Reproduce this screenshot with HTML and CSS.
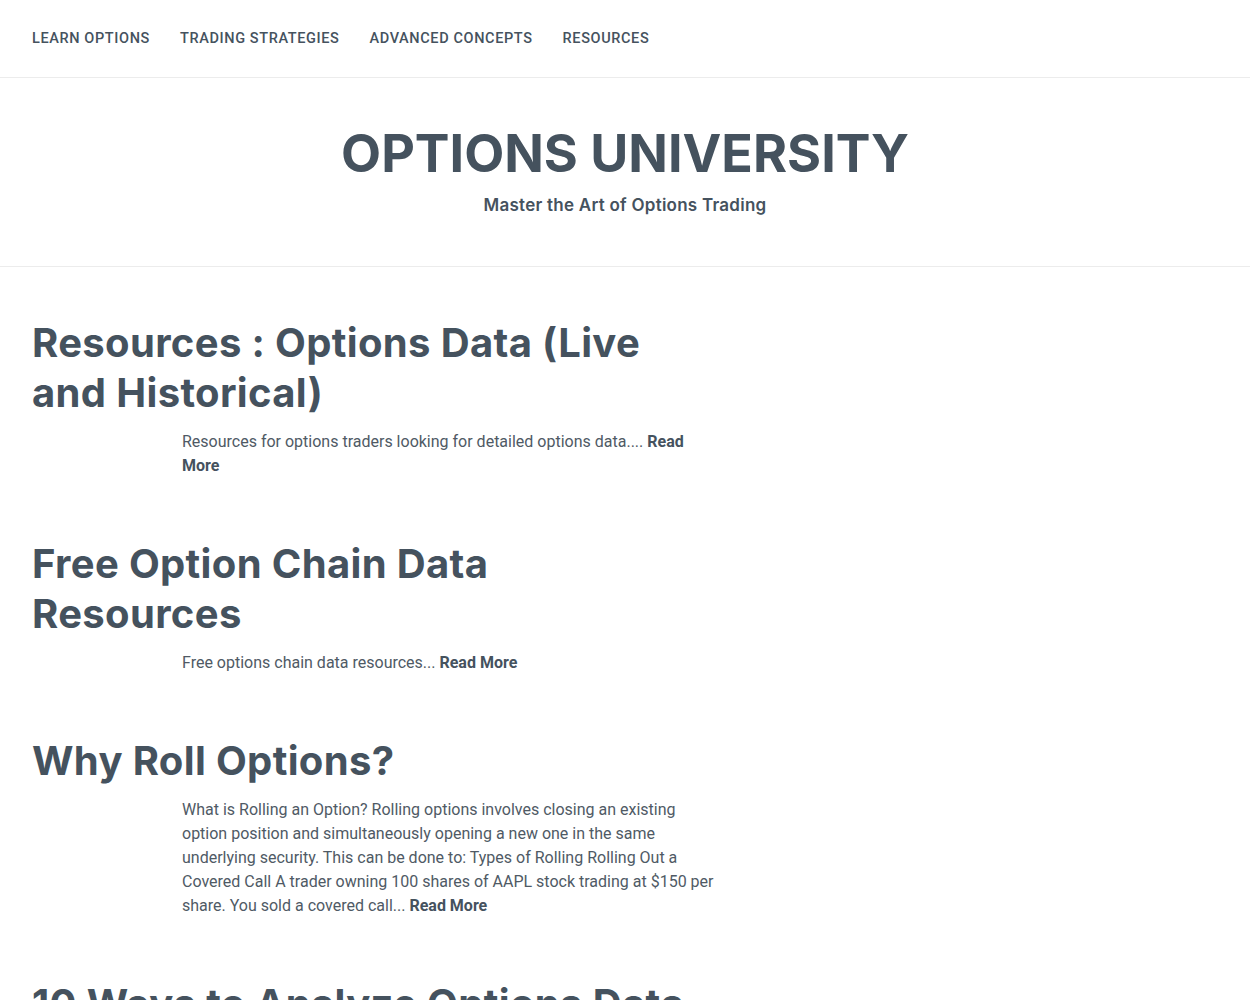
FILE: index.html
```html
<!DOCTYPE html>
<html lang="en">
<head>
<meta charset="utf-8">
<title>Options University</title>
<link rel="stylesheet" href="styles.css">
</head>
<body>
<nav class="topnav">
  <ul class="menu">
    <li><a href="#">Learn Options</a></li>
    <li><a href="#">Trading Strategies</a></li>
    <li><a href="#">Advanced Concepts</a></li>
    <li><a href="#">Resources</a></li>
  </ul>
</nav>
<header class="site-header">
  <h1 class="site-title">OPTIONS UNIVERSITY</h1>
  <p class="site-tagline">Master the Art of Options Trading</p>
</header>
<main class="posts">
  <article class="post">
    <h2 class="post-title">Resources : Options Data (Live and Historical)</h2>
    <p class="excerpt">Resources for options traders looking for detailed options data.... <a href="#" class="more">Read More</a></p>
  </article>
  <article class="post">
    <h2 class="post-title">Free Option Chain Data Resources</h2>
    <p class="excerpt">Free options chain data resources... <a href="#" class="more">Read More</a></p>
  </article>
  <article class="post">
    <h2 class="post-title">Why Roll Options?</h2>
    <p class="excerpt">What is Rolling an Option? Rolling options involves closing an existing option position and simultaneously opening a new one in the same underlying security. This can be done to: Types of Rolling Rolling Out a Covered Call A trader owning 100 shares of AAPL stock trading at $150 per share. You sold a covered call... <a href="#" class="more">Read More</a></p>
  </article>
  <article class="post">
    <h2 class="post-title">10 Ways to Analyze Options Data</h2>
  </article>
</main>
</body>
</html>
```
FILE: styles.css
```css
* { box-sizing: border-box; }
html, body { margin: 0; padding: 0; background: #fff; }
body {
  font-family: "Roboto", "Liberation Sans", sans-serif;
  color: #45525e;
}
a { color: inherit; text-decoration: none; }

.topnav {
  height: 78px;
  border-bottom: 1px solid #ececec;
  display: flex;
  align-items: center;
  padding: 0 32px 2px;
}
.menu {
  list-style: none;
  margin: 0;
  padding: 0;
  display: flex;
  gap: 30px;
}
.menu a {
  font-size: 14.5px;
  font-weight: 500;
  text-transform: uppercase;
  letter-spacing: 0.62px;
  color: #45525e;
}

.site-header {
  border-bottom: 1px solid #ececec;
  text-align: center;
  padding: 46px 0 49px;
}
.site-title {
  margin: 0;
  font-family: "Inter", "DejaVu Sans", sans-serif;
  font-weight: 700;
  font-size: 52px;
  line-height: 60px;
  color: #45525e;
}
.site-tagline {
  margin: 9px 0 0;
  font-family: "Inter", "DejaVu Sans", sans-serif;
  font-weight: 600;
  font-size: 17px;
  letter-spacing: 0.25px;
  line-height: 24px;
}

.posts {
  padding: 51px 32px 0;
  width: 752px;
}
.post { margin-bottom: 61px; }
.post-title {
  margin: 0;
  max-width: 670px;
  font-family: "Inter", "DejaVu Sans", sans-serif;
  font-weight: 700;
  font-size: 40px;
  letter-spacing: 0.35px;
  line-height: 50px;
  color: #45525e;
}
.excerpt {
  margin: 12px 0 0 150px;
  font-size: 16px;
  line-height: 24px;
  color: #4f5a65;
}
.more { font-weight: 700; color: #45525e; }
```
